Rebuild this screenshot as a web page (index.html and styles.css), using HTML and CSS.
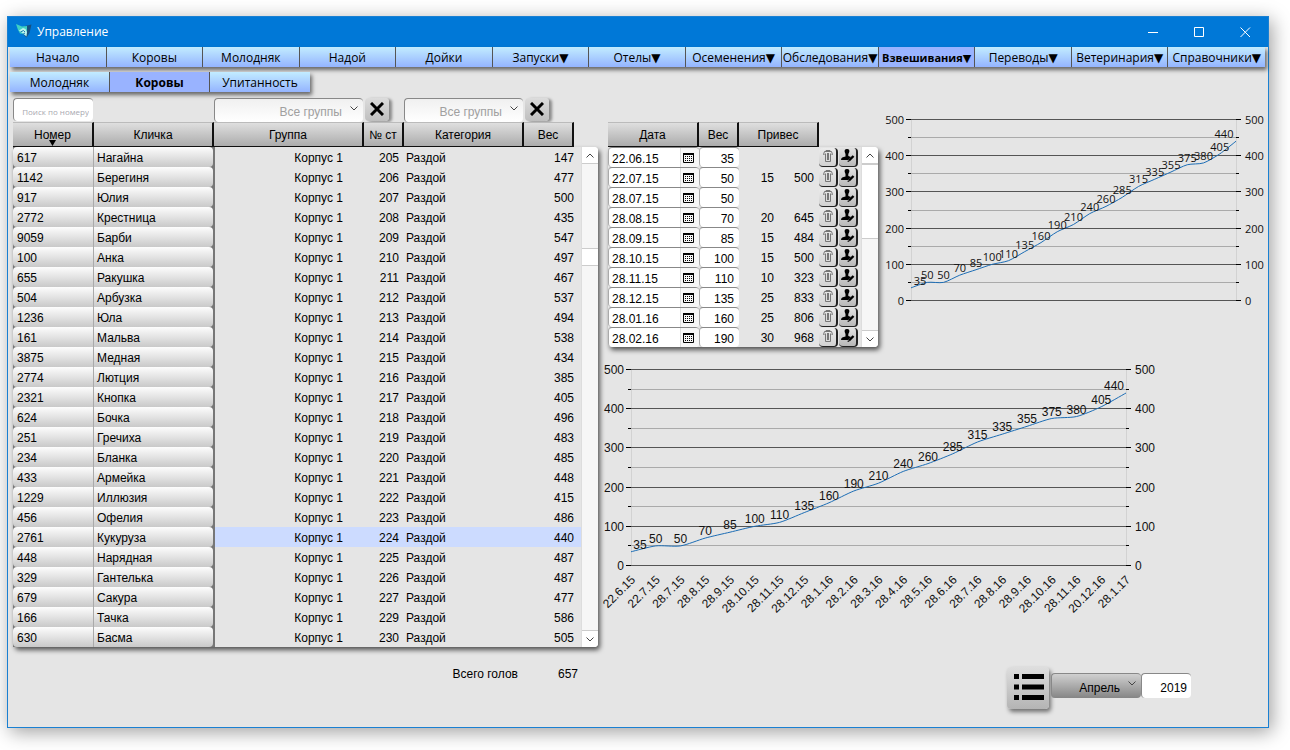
FILE: index.html
```html
<!DOCTYPE html>
<html lang="ru">
<head>
<meta charset="utf-8">
<title>Управление</title>
<link rel="stylesheet" href="styles.css">
</head>
<body>
<div class="window">
  <header class="titlebar">
    <svg class="logo" width="16" height="14" viewBox="0 0 16 14" aria-hidden="true">
      <path d="M9 2L15.500 0.500L13.500 9L10.500 13.500L8 11Z" fill="#17507f"/>
      <path d="M0 0L6 2.500L11 2L11 7L9 10L4 9.500L2 6Z" fill="#3fd0c4"/>
      <path d="M3 6.500L7 4L9.500 5L11 8L10.500 12.500L7 9.500Z" fill="#bdf3ee"/>
      <path d="M4.500 8L7.500 6.500L9 8M6.500 10.500L9 9" stroke="#1a7fae" fill="none"/>
    </svg>
    <h1 class="title">Управление</h1>
    <div class="window-controls">
      <button class="control" aria-label="Свернуть"><svg width="11" height="11" viewBox="0 0 11 11"><path d="M0 5.500H10"/></svg></button>
      <button class="control" aria-label="Развернуть"><svg width="11" height="11" viewBox="0 0 11 11"><path d="M.5.5H9.500V9.500H.5Z"/></svg></button>
      <button class="control" aria-label="Закрыть"><svg width="11" height="11" viewBox="0 0 11 11"><path d="M.5.5L10 10M10 .5L.5 10"/></svg></button>
    </div>
  </header>

  <nav class="menu menu-main" aria-label="Разделы">
    <button>Начало</button>
    <button>Коровы</button>
    <button>Молодняк</button>
    <button>Надой</button>
    <button>Дойки</button>
    <button>Запуски▼</button>
    <button>Отелы▼</button>
    <button>Осеменения▼</button>
    <button>Обследования▼</button>
    <button class="current">Взвешивания▼</button>
    <button>Переводы▼</button>
    <button>Ветеринария▼</button>
    <button>Справочники▼</button>
  </nav>
  <nav class="menu menu-sub" aria-label="Взвешивания">
    <button>Молодняк</button>
    <button class="current">Коровы</button>
    <button>Упитанность</button>
  </nav>

  <main class="content">
    <section class="herd">
      <div class="filters">
        <input class="search" type="text" placeholder="Поиск по номеру" aria-label="Поиск по номеру">
        <span class="picker picker-group">
          <select aria-label="Группа"><option>Все группы</option></select>
          <svg class="arrow" width="8" height="5" viewBox="0 0 8 5"><path d="M.5.5L4 4L7.500.5"/></svg>
        </span>
        <button class="clear" aria-label="Сбросить группу"><svg width="14" height="14" viewBox="0 0 14 14"><path d="M1 1L13 13M13 1L1 13"/></svg></button>
        <span class="picker picker-category">
          <select aria-label="Категория"><option>Все группы</option></select>
          <svg class="arrow" width="8" height="5" viewBox="0 0 8 5"><path d="M.5.5L4 4L7.500.5"/></svg>
        </span>
        <button class="clear" aria-label="Сбросить категорию"><svg width="14" height="14" viewBox="0 0 14 14"><path d="M1 1L13 13M13 1L1 13"/></svg></button>
      </div>
      <div class="panel">
        <table class="grid">
          <colgroup><col class="w-num"><col class="w-name"><col class="w-group"><col class="w-stall"><col class="w-cat"><col class="w-weight"><col></colgroup>
          <thead><tr>
            <th class="sorted">Номер<svg class="sort" width="7" height="6" viewBox="0 0 7 6"><path d="M0 0H7L3.500 6Z"/></svg></th>
            <th>Кличка</th><th>Группа</th><th>№ ст</th><th>Категория</th><th>Вес</th><td></td>
          </tr></thead>
          <tbody id="cows"></tbody>
        </table>
        <div class="scrollbar scrollbar-herd">
          <button aria-label="Вверх"><svg width="8" height="5" viewBox="0 0 8 5"><path d="M.5 4.500L4 1L7.500 4.500"/></svg></button>
          <span class="thumb"></span>
          <button class="down" aria-label="Вниз"><svg width="8" height="5" viewBox="0 0 8 5"><path d="M.5.5L4 4L7.500.5"/></svg></button>
        </div>
      </div>
      <p class="total"><span>Всего голов</span><output>657</output></p>
    </section>

    <section class="details">
      <div class="details-top">
        <div class="panel panel-weights">
          <table class="grid">
            <colgroup><col class="w-date"><col class="w-kg"><col class="w-gain"><col class="w-gain"><col class="w-act"><col class="w-act"><col></colgroup>
            <thead><tr><th>Дата</th><th>Вес</th><th colspan="2">Привес</th><td></td><td></td><td></td></tr></thead>
            <tbody id="weights"></tbody>
          </table>
          <div class="scrollbar scrollbar-weights">
            <button aria-label="Вверх"><svg width="8" height="5" viewBox="0 0 8 5"><path d="M.5 4.500L4 1L7.500 4.500"/></svg></button>
            <span class="thumb"></span>
            <button class="down" aria-label="Вниз"><svg width="8" height="5" viewBox="0 0 8 5"><path d="M.5.5L4 4L7.500.5"/></svg></button>
          </div>
        </div>
        <svg class="chart chart-small" id="chart-small" viewBox="0 0 384 200" role="img" aria-label="Вес"></svg>
      </div>
      <svg class="chart chart-large" id="chart-large" viewBox="0 0 556 260" role="img" aria-label="Вес по датам"></svg>
      <div class="tools">
        <button class="list" aria-label="Список"><svg width="30" height="26" viewBox="0 0 30 26"><path d="M0 0H5V5H0ZM8 0H30V5H8ZM0 10.500H5V15.500H0ZM8 10.500H30V15.500H8ZM0 21H5V26H0ZM8 21H30V26H8Z"/></svg></button>
        <span class="picker picker-month">
          <select aria-label="Месяц"><option>Апрель</option></select>
          <svg class="arrow" width="8" height="5" viewBox="0 0 8 5"><path d="M.5.5L4 4L7.500.5"/></svg>
        </span>
        <input class="year" type="text" value="2019" aria-label="Год">
      </div>
    </section>
  </main>
</div>
<script src="app.js"></script>
</body>
</html>
```
FILE: styles.css
```css
* { box-sizing: border-box; }

body {
  margin: 0;
  padding: 16px 21px 22px 7px;
  background: #fff;
  color: #000;
  font: 12px/20px "Liberation Sans", Arial, sans-serif;
}

button, input, select {
  margin: 0;
  padding: 0;
  border: 0;
  font: inherit;
  color: inherit;
}

.window {
  min-height: calc(100vh - 38px);
  border: 1px solid #1a80d2;
  background: #e5e5e5;
  box-shadow: 3px 4px 18px rgba(0, 0, 0, .38);
}

/* Title bar */
.titlebar {
  display: flex;
  align-items: center;
  height: 30px;
  padding-left: 8px;
  background: #0078d7;
  color: #fff;
}
.logo { margin-bottom: 2px; }
.title {
  margin: 0 auto 0 5px;
  font: 12px/20px "Open Sans", sans-serif;
}
.window-controls { display: flex; }
.control {
  display: flex;
  align-items: center;
  justify-content: center;
  width: 46px;
  height: 30px;
  background: none;
}
.control svg { fill: none; stroke: #fff; }

/* Menus */
.menu {
  display: grid;
  grid-auto-flow: column;
  grid-auto-columns: minmax(0, 1fr);
  margin-left: 2px;
  box-shadow: 2px 3px 4px rgba(0, 0, 0, .55);
  font: 12px/20px "Open Sans", "DejaVu Sans", sans-serif;
}
.menu-main { margin-right: 3px; }
.menu-sub { width: 300px; margin-top: 5px; }
.menu button {
  display: flex;
  justify-content: center;
  height: 20px;
  padding-top: 1px;
  border-right: 1px solid #555;
  background: linear-gradient(#c2ecff, #94b4ff);
  white-space: nowrap;
}
.menu button:last-child { border-right: 0; }
.menu button.current { background: #99b3ff; font-weight: bold; }
.menu-main button.current { font-size: 11px; }

/* Content */
.content {
  display: grid;
  grid-template-columns: 585px minmax(0, 1fr);
  column-gap: 4px;
  padding: 6px 2px 0 5px;
}

.filters { display: flex; height: 24px; }
.search, .picker select, .year {
  border: solid #888;
  border-width: 1px 0 0 1px;
  border-radius: 4px;
  text-align: right;
}
.search {
  width: 80px;
  height: 23px;
  margin-right: 121px;
  padding: 2px 4px 0 0;
  background: #fff;
  font: 8px/16px "Open Sans", sans-serif;
}
.search::placeholder { color: #a8a8b0; opacity: 1; }
.picker { position: relative; display: block; }
.picker select {
  width: 100%;
  height: 24px;
  padding: 3px 21px 0 0;
  background: linear-gradient(#f0f0f0, #fff);
  color: #a0a0a0;
  text-align-last: right;
  appearance: none;
}
.arrow { position: absolute; top: 8px; right: 5px; }
.arrow, .scrollbar svg { fill: none; stroke: #444; }
.picker-group { width: 149px; }
.picker-category { width: 119px; }
.clear {
  display: flex;
  align-items: center;
  justify-content: center;
  width: 24px;
  height: 23px;
  margin: 0 15px 0 2px;
  padding-bottom: 2px;
  border-radius: 4px;
  background: linear-gradient(#dcdcdc, #bebebe);
  box-shadow: 3px 1px 3px rgba(0, 0, 0, .4);
}
.clear svg { fill: none; stroke: #000; stroke-width: 3; }

/* Tables */
.panel { position: relative; display: flex; isolation: isolate; }
.panel::before {
  content: "";
  position: absolute;
  inset: 25px 0 0 0;
  z-index: -1;
  border-radius: 4px;
  background: #e5e5e5;
  box-shadow: 2px 3px 5px rgba(0, 0, 0, .65);
}
.grid {
  flex: 1;
  table-layout: fixed;
  width: 100%;
  border-collapse: separate;
  border-spacing: 0;
}
.grid td, .grid th { height: 20px; padding: 0; line-height: 18px; white-space: nowrap; }
.grid tbody .plain, .grid tbody .gain { padding-top: 2px; }
.grid thead th {
  height: 25px;
  border-top: 1px solid #bbb;
  border-right: 2px solid #111;
  border-bottom: 1px solid #111;
  background: linear-gradient(#dfdfdf, #acacac);
  font-weight: normal;
  text-align: center;
}
.sorted { position: relative; }
.sort { position: absolute; bottom: 0; left: 36px; }
.w-num { width: 81px; }
.w-name { width: 120px; }
.w-group { width: 150px; }
.w-stall { width: 40px; }
.w-cat { width: 120px; }
.w-weight { width: 50px; }
.right { text-align: right; }
.grid .group { padding-right: 21px; border-left: 1px solid #777; }
.grid .stall { padding-right: 5px; }
.grid .category { padding-left: 2px; }
.selected .plain { background: #ccdbff; }
.grid tbody .cell { background: #777; }
.grid tbody .cell button {
  display: block;
  width: 100%;
  height: 20px;
  padding: 2px 0 0 4px;
  background: linear-gradient(#fdfdfd, #c9c9c9);
  text-align: left;
}
.grid tbody .num button { border-right: 1px solid #aaa; border-radius: 4px 0 0 4px; }
.grid tbody .name button { padding-left: 3px; border-radius: 0 4px 4px 0; }
.grid tbody .name { padding-right: 1px; }

.scrollbar {
  display: flex;
  flex-direction: column;
  width: 17px;
  margin-top: 25px;
  border-left: 1px solid #ddd;
  border-radius: 0 4px 4px 0;
  background: #f6f6f6;
  overflow: hidden;
}
.scrollbar button {
  display: flex;
  align-items: center;
  justify-content: center;
  height: 17px;
  border-bottom: 1px solid #ccc;
  background: #fff;
}
.scrollbar .down { margin-top: auto; border-top: 1px solid #ccc; border-bottom: 0; }
.thumb { background: #fff; border-top: 1px solid #ccc; border-bottom: 1px solid #ccc; }
.scrollbar-herd .thumb { height: 18px; margin-top: 84px; }
.scrollbar-weights .thumb { height: 75px; }

.total {
  display: flex;
  justify-content: flex-end;
  gap: 40px;
  margin: 17px 20px 0 0;
}

/* Weighings */
.details { padding-top: 12px; }
.details-top { display: flex; align-items: flex-start; gap: 4px; }
.panel-weights { flex: none; width: 270px; margin: 12px 0 0 6px; }
.w-date { width: 91px; }
.w-kg { width: 40px; }
.w-gain { width: 40px; }
.w-act { width: 20px; }
.grid .gain { padding-right: 5px; }
.field {
  display: flex;
  height: 20px;
  border-top: 1px solid #888;
  border-left: 1px solid #aaa;
  border-radius: 4px;
  background: #fff;
  overflow: hidden;
}
.field input { flex: 1; min-width: 0; padding: 2px 0 0 3px; background: none; }
.field .kg { padding: 2px 5px 0 0; text-align: right; }
.calendar {
  display: flex;
  align-items: center;
  justify-content: center;
  width: 19px;
  padding-right: 3px;
  border-left: 1px solid #ddd;
  background: #f5f5f5;
}
.action {
  display: flex;
  align-items: center;
  justify-content: center;
  width: 19px;
  height: 19px;
  padding-bottom: 2px;
  border-right: 2px solid #222;
  border-bottom: 1px solid #222;
  border-radius: 4px;
  background: linear-gradient(#e2e2e2, #b8b8b8);
}
.action.remove { background: linear-gradient(#ececec, #d2d2d2); }

/* Charts */
.chart { display: block; overflow: visible; }
.chart-small { flex: 1; min-width: 0; font: 11px "Open Sans", sans-serif; }
.chart-large { width: 556px; max-width: 100%; margin-top: 12px; font-size: 12px; }
.chart .major { stroke: #555; }
.chart .minor { stroke: #aaa; }
.chart .side { stroke: #d2d2d2; }
.chart .tick { stroke: #000; }
.chart .line { fill: none; stroke: #1c6db5; stroke-width: 1; }
.chart text { fill: #111; }

/* Report tools */
.tools {
  display: flex;
  justify-content: flex-end;
  margin: 48px 75px 0 0;
}
.list {
  display: flex;
  align-items: center;
  justify-content: center;
  width: 42px;
  height: 42px;
  padding: 0 0 2px 1px;
  margin-right: 2px;
  border-radius: 4px;
  background: linear-gradient(#dedede, #b4b4b4);
  box-shadow: 2px 3px 4px rgba(0, 0, 0, .5);
}
.picker-month { width: 90px; margin-top: 6px; }
.picker-month select {
  height: 25px;
  padding-top: 4px;
  background: linear-gradient(#d0d0d0, #858585);
  color: #000;
}
.year {
  width: 50px;
  height: 25px;
  margin-top: 6px;
  padding: 4px 4px 0 0;
  background: #fff;
}
```
FILE: app.js
```js
const cows = [
  [617, 'Нагайна', 205, 147], [1142, 'Берегиня', 206, 477], [917, 'Юлия', 207, 500],
  [2772, 'Крестница', 208, 435], [9059, 'Барби', 209, 547], [100, 'Анка', 210, 497],
  [655, 'Ракушка', 211, 467], [504, 'Арбузка', 212, 537], [1236, 'Юла', 213, 494],
  [161, 'Мальва', 214, 538], [3875, 'Медная', 215, 434], [2774, 'Лютция', 216, 385],
  [2321, 'Кнопка', 217, 405], [624, 'Бочка', 218, 496], [251, 'Гречиха', 219, 483],
  [234, 'Бланка', 220, 485], [433, 'Армейка', 221, 448], [1229, 'Иллюзия', 222, 415],
  [456, 'Офелия', 223, 486], [2761, 'Кукуруза', 224, 440], [448, 'Нарядная', 225, 487],
  [329, 'Гантелька', 226, 487], [679, 'Сакура', 227, 477], [166, 'Тачка', 229, 586],
  [630, 'Басма', 230, 505]
];
const selected = 2761;

document.getElementById('cows').innerHTML = cows.map(([num, name, stall, kg]) => `
  <tr${num === selected ? ' class="selected"' : ''}>
    <td class="cell num"><button>${num}</button></td>
    <td class="cell name"><button>${name}</button></td>
    <td class="plain right group">Корпус 1</td>
    <td class="plain right stall">${stall}</td>
    <td class="plain category">Раздой</td>
    <td class="plain right">${kg}</td>
    <td class="plain"></td>
  </tr>`).join('');

const weighings = [
  ['22.06.15', 35, '', ''], ['22.07.15', 50, 15, 500], ['28.07.15', 50, '', ''],
  ['28.08.15', 70, 20, 645], ['28.09.15', 85, 15, 484], ['28.10.15', 100, 15, 500],
  ['28.11.15', 110, 10, 323], ['28.12.15', 135, 25, 833], ['28.01.16', 160, 25, 806],
  ['28.02.16', 190, 30, 968]
];
const calendarIcon = `<svg width="11" height="10" viewBox="0 0 11 10"><path d="M.5 1V9.500H10.500V1" fill="none" stroke="#000"/><path d="M0 0H11V2H0Z"/><path d="M2 3.500H9M2 5.500H9M2 7.500H9" stroke="#000" stroke-dasharray="1 1"/></svg>`;
const trashIcon = `<svg width="10" height="12" viewBox="0 0 10 12" fill="none" stroke="#777"><path d="M3 1.500V.5H7V1.500M1.500 4.500H.5L1.500 1.500H8.500L9.500 4.500H8.500M2.500 3.500V11.500H7.500V3.500M4.500 3V10M5.500 3V10"/></svg>`;
const personIcon = `<svg width="14" height="13" viewBox="0 0 14 13"><path d="M6 0C8 0 8.700 1.300 8.300 3L7.300 5V7L10 8L7 11H0C0 8.500 2 8 4.500 7.500V5L3.700 3C3.400 1.300 4 0 6 0Z"/><path d="M8 11.500L12.500 7" stroke="#000" stroke-width="2.400"/><path d="M6.500 13L7 11L8.500 12.500Z"/></svg>`;

document.getElementById('weights').innerHTML = weighings.map(([date, kg, gain, daily]) => `
  <tr>
    <td><span class="field"><input type="text" value="${date}" aria-label="Дата"><button class="calendar" aria-label="Календарь">${calendarIcon}</button></span></td>
    <td><span class="field"><input class="kg" type="text" value="${kg}" aria-label="Вес"></span></td>
    <td class="right gain">${gain}</td>
    <td class="right gain">${daily}</td>
    <td><button class="action remove" aria-label="Удалить">${trashIcon}</button></td>
    <td><button class="action" aria-label="Изменить">${personIcon}</button></td>
    <td></td>
  </tr>`).join('');

const values = [35, 50, 50, 70, 85, 100, 110, 135, 160, 190, 210, 240, 260, 285, 315, 335, 355, 375, 380, 405, 440];
const dates = ['22.6.15', '22.7.15', '28.7.15', '28.8.15', '28.9.15', '28.10.15', '28.11.15', '28.12.15', '28.1.16',
  '28.2.16', '28.3.16', '28.4.16', '28.5.16', '28.6.16', '28.7.16', '28.8.16', '28.9.16', '28.10.16', '28.11.16',
  '20.12.16', '28.1.17'];

function drawChart(id, left, right, top, bottom, labels) {
  const x = i => left + (right - left) * i / (values.length - 1);
  const y = v => bottom - (bottom - top) * v / 500;
  let out = `<path class="side" d="M${left + .5} ${top}V${bottom}M${right + .5} ${top}V${bottom}"/>`;
  for (let v = 0; v <= 500; v += 50) {
    const major = v % 100 === 0;
    const row = Math.floor(y(v)) + .5;
    const tick = major ? 5 : 3;
    out += `<path class="${major ? 'major' : 'minor'}" d="M${left} ${row}H${right}"/>`;
    out += `<path class="tick" d="M${left - tick} ${row}H${left}M${right} ${row}H${right + tick}"/>`;
    if (major) {
      out += `<text x="${left - 7}" y="${row + 4}" text-anchor="end">${v}</text>`;
      out += `<text x="${right + 9}" y="${row + 4}">${v}</text>`;
    }
  }
  const point = i => {
    const k = Math.max(0, Math.min(values.length - 1, i));
    return [x(k), y(values[k])];
  };
  let d = `M${point(0)}`;
  for (let i = 0; i < values.length - 1; i++) {
    const [a, b, c, e] = [point(i - 1), point(i), point(i + 1), point(i + 2)];
    d += `C${b[0] + (c[0] - a[0]) / 8} ${b[1] + (c[1] - a[1]) / 8} ${c[0] - (e[0] - b[0]) / 8} ${c[1] - (e[1] - b[1]) / 8} ${c[0]} ${c[1]}`;
  }
  out += `<path class="line" d="${d}"/>`;
  values.forEach((v, i) => {
    const shift = i === 0 ? 9 : i === values.length - 1 ? -12 : 0;
    out += `<text x="${x(i) + shift}" y="${y(v) - 3}" text-anchor="middle">${v}</text>`;
  });
  if (labels) {
    labels.forEach((t, i) => {
      out += `<text transform="translate(${x(i) + 5} ${bottom + 15}) rotate(-45)" text-anchor="end">${t}</text>`;
    });
  }
  document.getElementById(id).innerHTML = out;
}

drawChart('chart-small', 29, 354, 9.5, 190.5, null);
drawChart('chart-large', 29, 524, 10.5, 206.5, dates);
```
